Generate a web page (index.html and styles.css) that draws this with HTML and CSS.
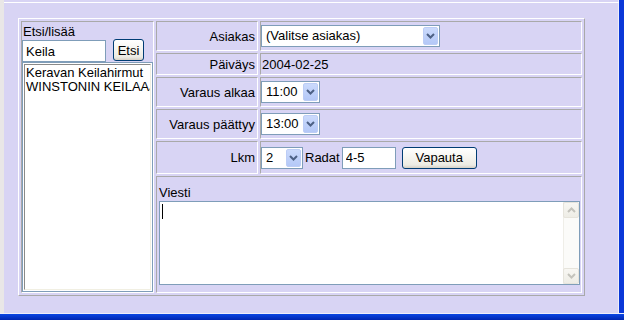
FILE: index.html
```html
<!DOCTYPE html>
<html>
<head>
    <meta charset="UTF-8">
    <title>Varaus</title>
    <link rel="stylesheet" href="styles.css">
</head>
<body>
    <div class="screen">
        <div class="gutter"></div>
        <div class="pane">
            <div class="sheet">
                <div class="form-table">
                    <div class="cell search-cell">
                        <div class="search-title">Etsi/lisää</div>
                        <div class="search-row">
                            <input type="text" class="text-input search-input" value="Keila">
                            <button class="xp-button etsi-button">Etsi</button>
                        </div>
                        <div class="listbox">
                            <div class="listbox-inner">
                                <div class="list-item">Keravan Keilahirmut</div>
                                <div class="list-item">WINSTONIN KEILAAJAT</div>
                            </div>
                        </div>
                    </div>

                    <div class="cell label-cell">Asiakas</div>
                    <div class="cell value-cell">
                        <div class="combo combo-customer">
                            <span class="combo-text">(Valitse asiakas)</span>
                            <span class="combo-button">
                                <svg width="9" height="6" viewBox="0 0 9 6"><polyline points="1,1 4.5,4.5 8,1" fill="none" stroke="#4d6185" stroke-width="2"/></svg>
                            </span>
                        </div>
                    </div>

                    <div class="cell label-cell">Päiväys</div>
                    <div class="cell value-cell">
                        <span class="plain-value">2004-02-25</span>
                    </div>

                    <div class="cell label-cell">Varaus alkaa</div>
                    <div class="cell value-cell">
                        <div class="combo combo-time">
                            <span class="combo-text">11:00</span>
                            <span class="combo-button">
                                <svg width="9" height="6" viewBox="0 0 9 6"><polyline points="1,1 4.5,4.5 8,1" fill="none" stroke="#4d6185" stroke-width="2"/></svg>
                            </span>
                        </div>
                    </div>

                    <div class="cell label-cell">Varaus päättyy</div>
                    <div class="cell value-cell">
                        <div class="combo combo-time">
                            <span class="combo-text">13:00</span>
                            <span class="combo-button">
                                <svg width="9" height="6" viewBox="0 0 9 6"><polyline points="1,1 4.5,4.5 8,1" fill="none" stroke="#4d6185" stroke-width="2"/></svg>
                            </span>
                        </div>
                    </div>

                    <div class="cell label-cell">Lkm</div>
                    <div class="cell value-cell">
                        <div class="combo combo-count">
                            <span class="combo-text">2</span>
                            <span class="combo-button">
                                <svg width="9" height="6" viewBox="0 0 9 6"><polyline points="1,1 4.5,4.5 8,1" fill="none" stroke="#4d6185" stroke-width="2"/></svg>
                            </span>
                        </div>
                        <span class="lanes-label">Radat</span>
                        <input type="text" class="text-input lanes-input" value="4-5">
                        <button class="xp-button release-button">Vapauta</button>
                    </div>

                    <div class="cell message-cell">
                        <div class="message-label">Viesti</div>
                        <div class="memo">
                            <div class="memo-body"><span class="caret"></span></div>
                            <div class="scrollbar">
                                <span class="scroll-btn">
                                    <svg width="9" height="6" viewBox="0 0 9 6"><polyline points="1,5 4.5,1.5 8,5" fill="none" stroke="#c4c3bc" stroke-width="2"/></svg>
                                </span>
                                <span class="scroll-btn">
                                    <svg width="9" height="6" viewBox="0 0 9 6"><polyline points="1,1 4.5,4.5 8,1" fill="none" stroke="#c4c3bc" stroke-width="2"/></svg>
                                </span>
                            </div>
                        </div>
                    </div>
                </div>
            </div>
        </div>
    </div>
    <div class="frame-bottom"></div>
</body>
</html>
```

FILE: styles.css
```css
body {
    margin: 0;
    width: 624px;
    height: 320px;
    overflow: hidden;
    background: #d8d4f4;
    font-family: "Liberation Sans", Arial, sans-serif;
    font-size: 13px;
    color: #000;
}

.screen {
    display: flex;
    height: 313px;
}

.gutter {
    width: 4px;
    background: #e9e7e7;
}

.pane {
    flex: 1;
    padding-top: 2px;
    border-right: 5px solid #0a38d8;
    box-shadow: inset -1px 0 0 #eeeefa;
}

.frame-bottom {
    height: 7px;
    box-sizing: border-box;
    border-top: 1px solid #eeeefa;
    background: linear-gradient(#0a46e4, #0026b0);
}

.sheet {
    border-top: 1px solid #fff;
    padding: 15px 0 0 14px;
}

.form-table {
    display: grid;
    grid-template-columns: 133px 102px 322px;
    grid-template-rows: 30px 22px 30px 30px 33px 117px;
    gap: 2px;
    width: 567px;
    padding: 2px;
    box-sizing: border-box;
    border: 1px solid;
    border-color: #fff #a9a9a9 #a9a9a9 #fff;
}

.cell {
    box-sizing: border-box;
    border: 1px solid;
    border-color: #a9a9a9 #fff #fff #a9a9a9;
    line-height: 15px;
}

.search-cell {
    grid-row: 1 / 7;
    padding-top: 2px;
}

.search-title {
    padding-left: 1px;
}

.search-row {
    display: flex;
    align-items: flex-start;
}

.text-input {
    height: 22px;
    box-sizing: border-box;
    margin: 0;
    padding: 0 3px;
    border: 1px solid #7f9db9;
    background: #fff;
    font-family: "Liberation Sans", Arial, sans-serif;
    font-size: 13px;
    color: #000;
    outline: none;
}

.search-input {
    width: 84px;
    margin-top: 1px;
}

.xp-button {
    height: 22px;
    box-sizing: border-box;
    margin: 0;
    padding: 0;
    border: 1px solid #003c74;
    border-radius: 3px;
    background: linear-gradient(#ffffff 0%, #f6f5f0 45%, #ecebe4 85%, #d6d0c5 100%);
    font-family: "Liberation Sans", Arial, sans-serif;
    font-size: 13px;
    color: #000;
}

.etsi-button {
    width: 31px;
    margin-left: 7px;
}

.listbox {
    width: 131px;
    height: 230px;
    box-sizing: border-box;
    border: 1px solid #7f9db9;
    padding: 1px;
    background: #fff;
}

.listbox-inner {
    height: 100%;
    box-sizing: border-box;
    border: 1px solid;
    border-color: #8a8a8a #f1efe2 #f1efe2 #8a8a8a;
    padding: 1px 0 0 1px;
    overflow: hidden;
}

.list-item {
    white-space: nowrap;
    line-height: 14px;
}

.label-cell {
    display: flex;
    align-items: center;
    justify-content: flex-end;
    padding-right: 2px;
    white-space: nowrap;
}

.value-cell {
    display: flex;
    align-items: center;
}

.plain-value {
    padding-left: 1px;
}

.combo {
    display: flex;
    height: 22px;
    box-sizing: border-box;
    border: 1px solid #7f9db9;
    padding: 1px;
    background: #fff;
}

.combo-customer {
    width: 179px;
}

.combo-time {
    width: 59px;
}

.combo-count {
    width: 42px;
}

.combo-text {
    flex: 1;
    padding-left: 3px;
    line-height: 18px;
    white-space: nowrap;
}

.combo-button {
    width: 15px;
    box-sizing: border-box;
    border: 1px solid #bccdf6;
    border-radius: 2px;
    background: linear-gradient(#cbdafc, #b4c8f7);
    display: flex;
    align-items: center;
    justify-content: center;
}

.lanes-label {
    margin-left: 2px;
}

.lanes-input {
    width: 54px;
    margin-left: 2px;
}

.release-button {
    width: 75px;
    margin-left: 6px;
}

.message-cell {
    grid-column: 2 / 4;
    padding: 8px 0 0 2px;
}

.message-label {
    margin-bottom: 1px;
}

.memo {
    display: flex;
    width: 421px;
    height: 84px;
    box-sizing: border-box;
    border: 1px solid #7f9db9;
    background: #fff;
}

.memo-body {
    flex: 1;
}

.caret {
    display: block;
    width: 1px;
    height: 15px;
    margin: 2px 0 0 2px;
    background: #000;
}

.scrollbar {
    width: 16px;
    display: flex;
    flex-direction: column;
    justify-content: space-between;
    background: #fbfbf9;
    box-shadow: inset 1px 0 0 #efeee8;
}

.scroll-btn {
    height: 16px;
    box-sizing: border-box;
    border: 1px solid #e6e4dc;
    border-radius: 2px;
    background: linear-gradient(#f8f7f3, #eeede6);
    display: flex;
    align-items: center;
    justify-content: center;
}
```
